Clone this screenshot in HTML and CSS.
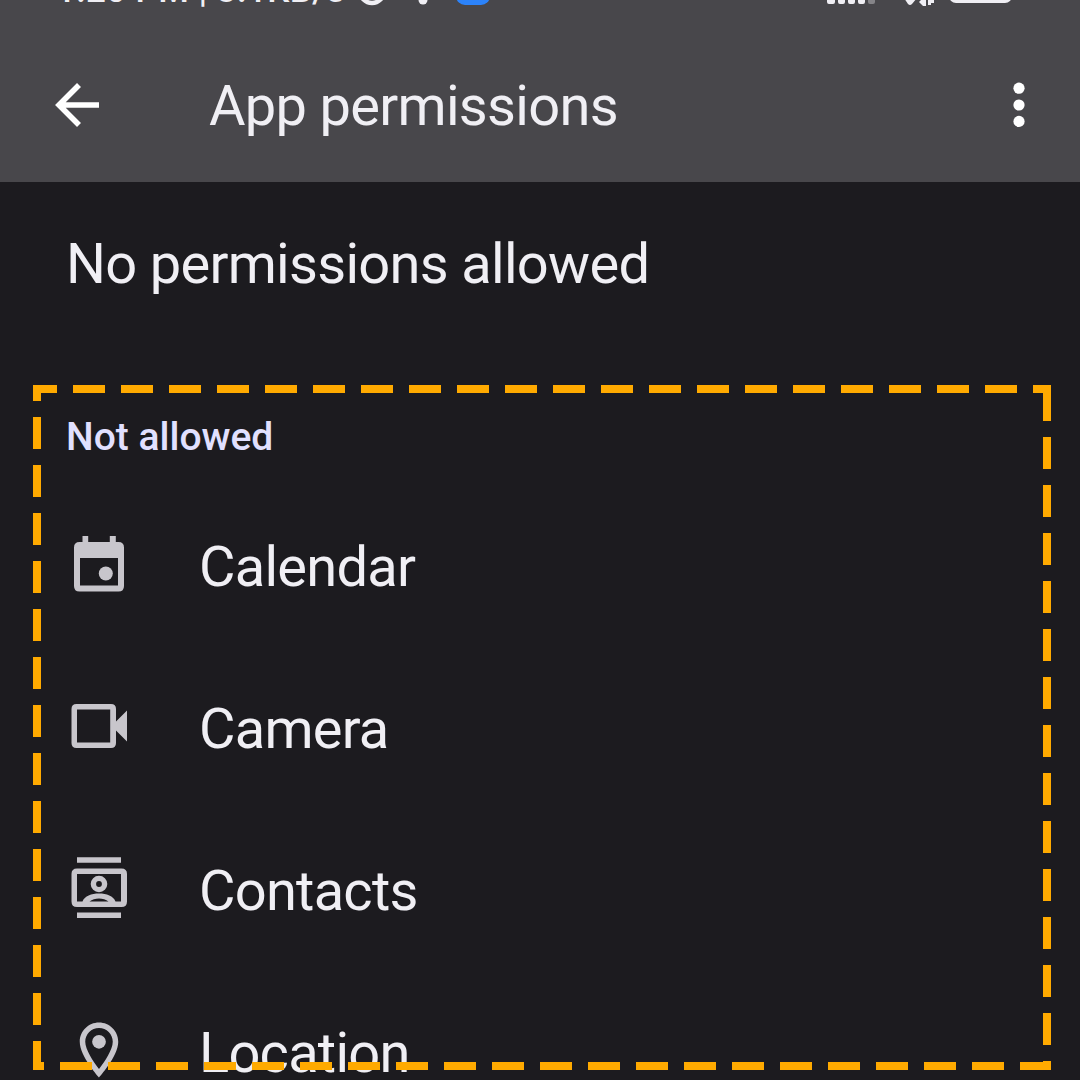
FILE: index.html
```html
<!DOCTYPE html>
<html lang="en">
<head>
	<title>App permissions</title>
	<meta charset="UTF-8">
	<meta name="viewport" content="width=device-width, initial-scale=1.0">
	<link rel="stylesheet" href="styles.css">
</head>
<body>
	<header>
		<div class="status">
			<span class="time">1:20 PM | 3.1KB/s</span>
			<svg class="status-icons" width="740" height="20" viewBox="340 0 740 20">
				<circle cx="372" cy="-9" r="12" fill="none" stroke="#f0eff4" stroke-width="4.5"/>
				<circle cx="423" cy="0" r="4.5" fill="#f0eff4"/>
				<rect x="456" y="-28" width="34" height="33" rx="9" fill="#2c83fa"/>
				<path d="M827 -9h8V2q0 2-2 2h-4q-2 0-2-2zM838 -9h7V2q0 2-2 2h-3q-2 0-2-2zM848 -9h7V2q0 2-2 2h-3q-2 0-2-2zM858 -9h7V2q0 2-2 2h-3q-2 0-2-2z" fill="#f0eff4"/>
				<path d="M868 -9h7V2q0 2-2 2h-3q-2 0-2-2z" fill="#858488"/>
				<path d="M904 -2h13l-5 6q-2 2-4 0zM919 2l4-4v8zM923 -4h3v10h-3zM928 -4h3v9h-3zM931 0h3v3h-3z" fill="#f0eff4"/>
				<rect x="949" y="-24" width="63" height="27" rx="7" fill="#f0eff4"/>
			</svg>
		</div>
		<div class="toolbar">
			<svg class="back" width="46" height="46" viewBox="0 0 46 46">
				<path d="M25 3L5 23l20 20M4 23h41" fill="none" stroke="#fff" stroke-width="5.6"/>
			</svg>
			<h1>App permissions</h1>
			<svg class="more" width="12" height="46" viewBox="0 0 12 46" fill="#fff">
				<circle cx="6" cy="6.2" r="5.6"/>
				<circle cx="6" cy="23" r="5.6"/>
				<circle cx="6" cy="39.4" r="5.6"/>
			</svg>
		</div>
	</header>

	<main>
		<p class="summary">No permissions allowed</p>
		<h2>Not allowed</h2>
		<ul class="permissions">
			<li>
				<svg viewBox="66 531 66 66">
					<path fill-rule="evenodd" d="M82.5 536h5.7v6h21.6v-6h6v6h2.7q5.5 0 5.5 5.5v38.5q0 5.5-5.5 5.5H79.5q-5.5 0-5.5-5.5v-38.5q0-5.5 5.5-5.5h3zM80 558v27.5h38V558z"/>
					<circle cx="105.8" cy="573.5" r="7"/>
				</svg>
				<span>Calendar</span>
			</li>
			<li>
				<svg viewBox="66 693 66 66">
					<path fill-rule="evenodd" d="M76.5 704h34.5q5 0 5 5v12.5l11-11v31l-11-11V743q0 5-5 5H76.5q-5 0-5-5v-34q0-5 5-5zM77 709.5v33h33.2v-33z"/>
				</svg>
				<span>Camera</span>
			</li>
			<li>
				<svg viewBox="66 855 66 66">
					<path fill-rule="evenodd" d="M77 857.3h44v5.5H77zM77 912.5h44v5.5H77zM77 868.5h44.5q5.5 0 5.5 5.5v27.5q0 5.5-5.5 5.5H77q-5.5 0-5.5-5.5V874q0-5.5 5.5-5.5zM77 874v27.5h5.5c2-5.5 9-8 16.500-8s14.500 2.500 16.500 8h5.500V874zM89.500 901.500c5-4 14-4 19 0z"/>
					<circle cx="99" cy="884" r="5.6" fill="none" stroke="#c8c6cc" stroke-width="5.4"/>
				</svg>
				<span>Contacts</span>
			</li>
			<li>
				<svg viewBox="0 0 24 24">
					<path d="M12 2C8.13 2 5 5.13 5 9c0 5.25 7 13 7 13s7-7.75 7-13c0-3.87-3.13-7-7-7zM7 9c0-2.76 2.24-5 5-5s5 2.24 5 5c0 2.88-2.88 7.19-5 9.88C9.92 16.21 7 11.85 7 9z"/>
					<circle cx="12" cy="9" r="2.5"/>
				</svg>
				<span>Location</span>
			</li>
		</ul>
	</main>
	<div class="highlight"></div>
</body>
</html>
```
FILE: styles.css
```css
* {
	box-sizing: border-box;
}

body {
	margin: 0;
	height: 1080px;
	overflow: hidden;
	position: relative;
	background-color: #1c1b1f;
	color: #f0eff4;
	font-family: Roboto, sans-serif;
}

h1, h2, p, ul {
	margin: 0;
	padding: 0;
	font-weight: 400;
}

header {
	height: 182px;
	background-color: #48474b;
}

.status {
	display: flex;
	align-items: flex-end;
	height: 20px;
	padding-left: 56px;
	overflow: hidden;
}

.time {
	width: 284px;
	flex: none;
	padding-bottom: 9px;
	font-size: 35px;
	line-height: 40px;
	font-weight: 500;
	letter-spacing: 0.4px;
	white-space: nowrap;
}

.status-icons {
	flex: none;
}

.toolbar {
	display: flex;
	align-items: center;
	height: 170px;
	padding: 0 55px 0 54px;
}

h1 {
	flex: 1;
	margin-left: 109px;
	padding-top: 1px;
	font-size: 56px;
	line-height: 66px;
	letter-spacing: -0.7px;
}

.summary {
	padding: 49px 0 0 66px;
	font-size: 56px;
	line-height: 66px;
	letter-spacing: -0.7px;
}

h2 {
	padding: 117px 0 0 66px;
	font-size: 39px;
	line-height: 46px;
	font-weight: 500;
	color: #e1e0ff;
}

.permissions {
	padding: 23px 0 0 66px;
	list-style: none;
}

.permissions li {
	display: flex;
	align-items: center;
	gap: 67px;
	height: 162px;
	font-size: 56px;
	line-height: 66px;
	letter-spacing: -0.75px;
}

.permissions span {
	padding-top: 6px;
}

.permissions svg {
	width: 66px;
	height: 66px;
	fill: #c8c6cc;
}

/* dashed frame around the "Not allowed" section */
.highlight {
	position: absolute;
	left: 33px;
	top: 385px;
	width: 1018px;
	height: 685px;
	--right: linear-gradient(90deg, #ffaa00 32px, transparent 32px);
	--down: linear-gradient(#ffaa00 32px, transparent 32px);
	background:
		var(--right) -8px 0 / 48px 8px repeat-x,
		var(--right) -21px 100% / 48px 8px repeat-x,
		var(--down) 0 -16px / 8px 48px repeat-y,
		var(--down) 100% 4px / 8px 48px repeat-y;
}
```
